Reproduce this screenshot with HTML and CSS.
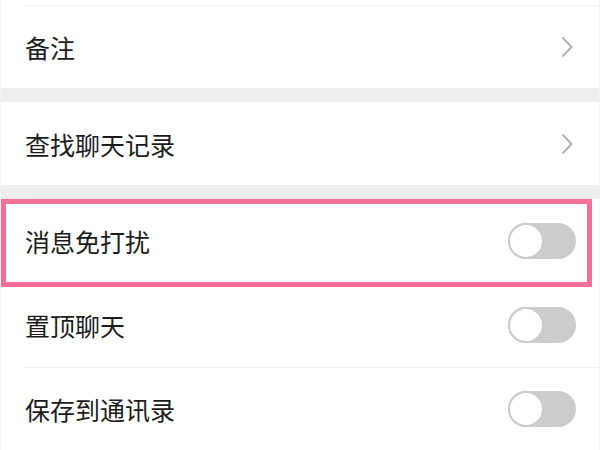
FILE: index.html
```html
<!DOCTYPE html>
<html lang="zh">
<head>
<meta charset="utf-8">
<link rel="stylesheet" href="styles.css">
</head>
<body>
<div class="page">
  <div class="top-space"></div>
  <div class="group">
    <div class="row line-top">
      <span class="label">备注</span>
      <svg class="chev" width="14" height="24" viewBox="0 0 14 24"><path d="M2.5 2.5 L11.5 12 L2.5 21.5" fill="none" stroke="#b2b2b2" stroke-width="2"/></svg>
    </div>
  </div>
  <div class="gap"></div>
  <div class="group">
    <div class="row">
      <span class="label">查找聊天记录</span>
      <svg class="chev" width="14" height="24" viewBox="0 0 14 24"><path d="M2.5 2.5 L11.5 12 L2.5 21.5" fill="none" stroke="#b2b2b2" stroke-width="2"/></svg>
    </div>
  </div>
  <div class="gap"></div>
  <div class="group">
    <div class="row tall">
      <span class="label">消息免打扰</span>
      <span class="toggle"><span class="knob"></span></span>
      <div class="highlight"></div>
    </div>
    <div class="row tall">
      <span class="label">置顶聊天</span>
      <span class="toggle"><span class="knob"></span></span>
    </div>
    <div class="row tall line-top">
      <span class="label">保存到通讯录</span>
      <span class="toggle"><span class="knob"></span></span>
    </div>
  </div>
</div>
</body>
</html>
```

FILE: styles.css
```css
html, body {
  margin: 0;
  padding: 0;
  background: #ffffff;
}
.page {
  width: 598px;
  height: 450px;
  overflow: hidden;
  border-left: 1px solid #f3f3f3;
  border-right: 1px solid #f3f3f3;
  font-family: "Noto Sans CJK SC", "Noto Sans", sans-serif;
  color: #1b1b1b;
}
.top-space {
  height: 5px;
}
.gap {
  height: 14px;
  background: #ededed;
}
.group {
  background: #ffffff;
}
.row {
  height: 83px;
  display: flex;
  align-items: center;
  justify-content: space-between;
  padding: 0 23px 0 24px;
  box-sizing: border-box;
  position: relative;
}
.row.tall {
  height: 84px;
}
.line-top::before {
  content: "";
  position: absolute;
  left: 23px;
  right: 0;
  top: 0;
  height: 1px;
  background: #efefef;
}
.label {
  font-size: 25px;
  line-height: 30px;
}
.chev {
  display: block;
  margin-right: 2px;
}
.toggle {
  width: 68px;
  height: 36px;
  border-radius: 18px;
  background: #cccccc;
  position: relative;
  box-sizing: border-box;
  display: block;
}
.knob {
  position: absolute;
  left: 0;
  top: 0;
  width: 36px;
  height: 36px;
  border-radius: 50%;
  background: #ffffff;
  border: 2px solid #cccccc;
  box-sizing: border-box;
}
.highlight {
  position: absolute;
  left: 0;
  top: 0;
  width: 591px;
  height: 88px;
  border: 5px solid #f47096;
  box-sizing: border-box;
  pointer-events: none;
}
```
